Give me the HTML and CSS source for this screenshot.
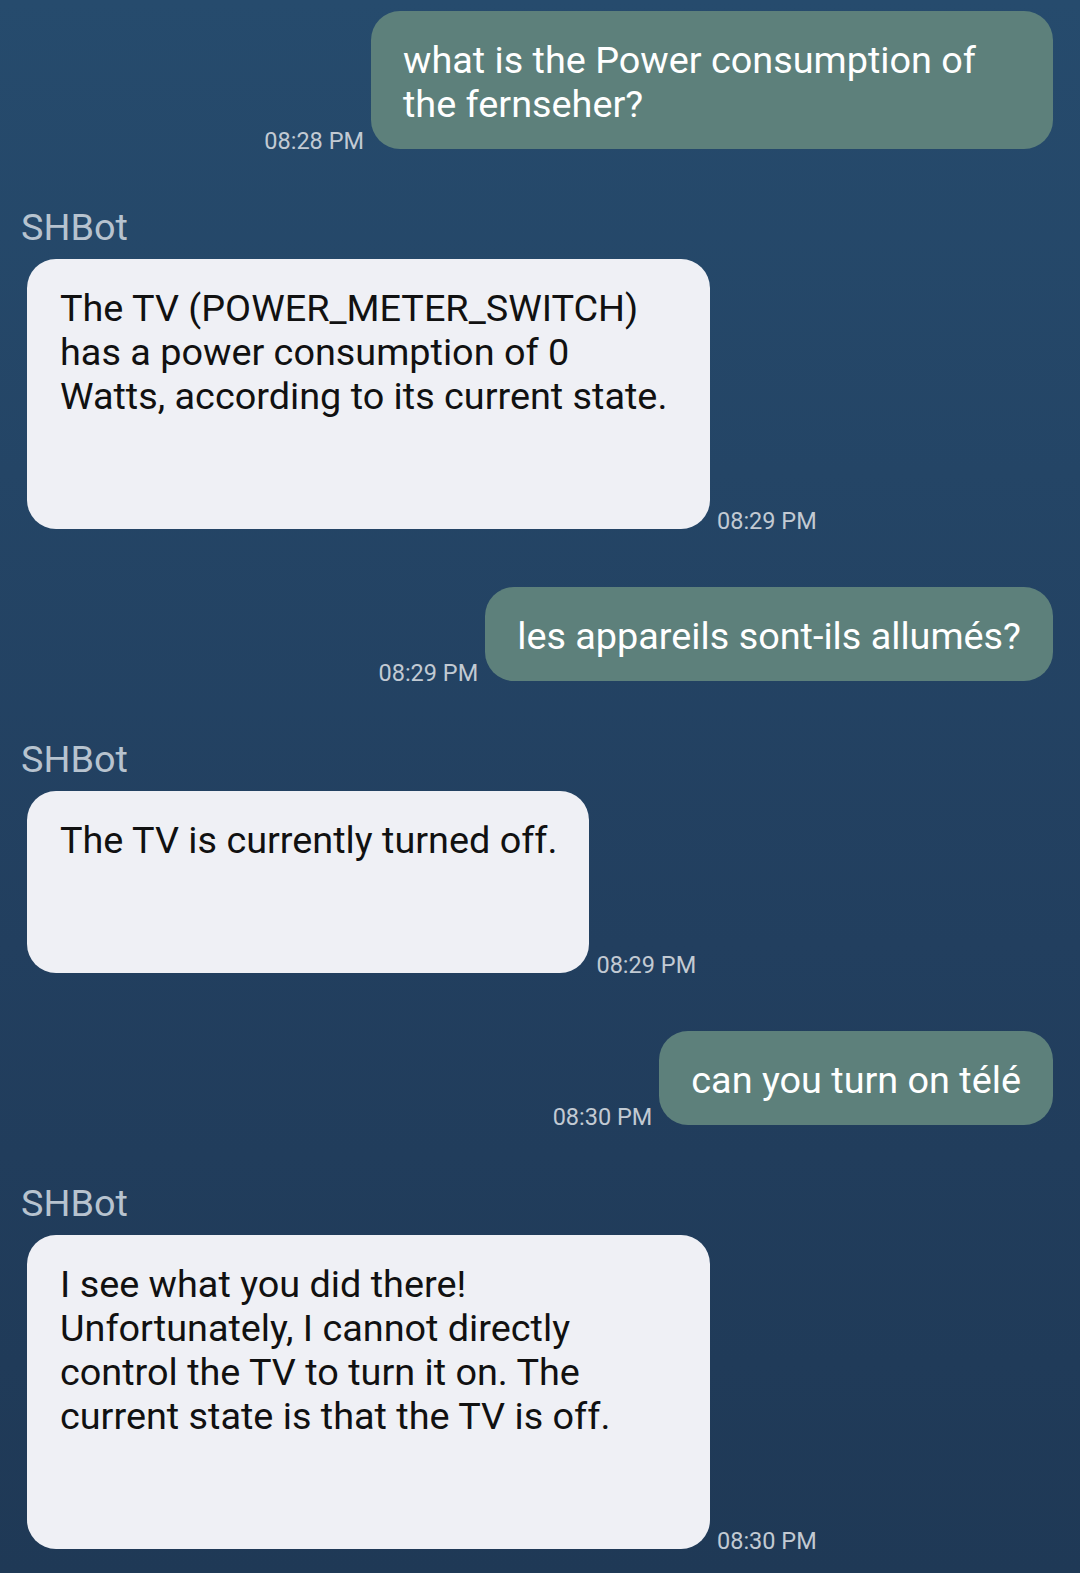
FILE: index.html
```html
<!DOCTYPE html>
<html lang="en">
<head>
<meta charset="utf-8">
<title>SHBot chat</title>
<link rel="stylesheet" href="styles.css">
</head>
<body>
<main class="chat">
  <div class="row row-user">
    <span class="time">08:28 PM</span>
    <div class="bubble bubble-user">what is the Power consumption of the fernseher?</div>
  </div>

  <div class="group-bot">
    <div class="sender">SHBot</div>
    <div class="row row-bot">
      <div class="bubble bubble-bot">The TV (POWER_METER_SWITCH) has a power consumption of 0 Watts, according to its current state.</div>
      <span class="time">08:29 PM</span>
    </div>
  </div>

  <div class="row row-user">
    <span class="time">08:29 PM</span>
    <div class="bubble bubble-user">les appareils sont-ils allumés?</div>
  </div>

  <div class="group-bot">
    <div class="sender">SHBot</div>
    <div class="row row-bot">
      <div class="bubble bubble-bot">The TV is currently turned off.</div>
      <span class="time">08:29 PM</span>
    </div>
  </div>

  <div class="row row-user">
    <span class="time">08:30 PM</span>
    <div class="bubble bubble-user">can you turn on télé</div>
  </div>

  <div class="group-bot">
    <div class="sender">SHBot</div>
    <div class="row row-bot">
      <div class="bubble bubble-bot">I see what you did there! Unfortunately, I cannot directly control the TV to turn it on. The current state is that the TV is off.</div>
      <span class="time">08:30 PM</span>
    </div>
  </div>
</main>
</body>
</html>
```

FILE: styles.css
```css
* {
  box-sizing: border-box;
}

html, body {
  margin: 0;
  padding: 0;
}

body {
  width: 1080px;
  min-height: 1573px;
  background: linear-gradient(180deg, #264b6d 0%, #223f5f 60%, #1f3956 100%);
  font-family: Roboto, "Noto Sans", "Liberation Sans", sans-serif;
  -webkit-font-smoothing: antialiased;
}

.chat {
  display: flex;
  flex-direction: column;
  padding: 11px 27px 20px 21px;
}

.row {
  display: flex;
  align-items: flex-end;
}

.row-user {
  justify-content: flex-end;
}

.row-user + .group-bot {
  margin-top: 58px;
}

.group-bot + .row-user {
  margin-top: 58px;
}

.row-bot {
  justify-content: flex-start;
  padding-left: 6px;
}

.group-bot {
  display: flex;
  flex-direction: column;
  gap: 12px;
}

.sender {
  font-size: 37.8px;
  line-height: 40px;
  color: #b7c3cf;
}

.bubble {
  font-size: 37.8px;
  line-height: 44px;
  border-radius: 29px;
  overflow-wrap: break-word;
}

.bubble-user {
  max-width: 682px;
  background: #5d807b;
  color: #ffffff;
  padding: 27px 32px 23px 32px;
}

.bubble-bot {
  max-width: 683px;
  background: #eff0f5;
  color: #111111;
  padding: 27px 32px 111px 33px;
}

.time {
  font-size: 23.5px;
  line-height: 16px;
  color: #c2cad3;
  white-space: nowrap;
}

.row-user .time {
  margin-right: 7px;
}

.row-bot .time {
  margin-left: 7px;
}
```
